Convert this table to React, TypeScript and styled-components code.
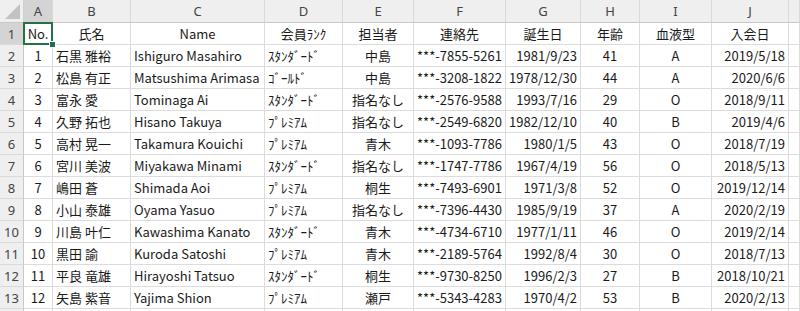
import styled, { createGlobalStyle, css } from 'styled-components'

const GlobalStyle = createGlobalStyle`
  html, body {
    margin: 0;
    padding: 0;
    background: #ffffff;
    overflow: hidden;
  }
`

// row header + A..J + the sliver of K at the right edge
const widths = [24, 29, 78, 134, 78, 71, 92, 75, 59, 72, 77, 11]
const letters = ['A', 'B', 'C', 'D', 'E', 'F', 'G', 'H', 'I', 'J', '']

type Align = 'left' | 'center' | 'right'

const aligns: Align[] = ['center', 'left', 'left', 'left', 'center', 'left', 'right', 'center', 'center', 'right', 'left']

const headers = ['No.', '氏名', 'Name', '会員ﾗﾝｸ', '担当者', '連絡先', '誕生日', '年齢', '血液型', '入会日', '']

const rows: string[][] = [
  ['1', '石黒 雅裕', 'Ishiguro Masahiro', 'ｽﾀﾝﾀﾞｰﾄﾞ', '中島', '***-7855-5261', '1981/9/23', '41', 'A', '2019/5/18'],
  ['2', '松島 有正', 'Matsushima Arimasa', 'ｺﾞｰﾙﾄﾞ', '中島', '***-3208-1822', '1978/12/30', '44', 'A', '2020/6/6'],
  ['3', '富永 愛', 'Tominaga Ai', 'ｽﾀﾝﾀﾞｰﾄﾞ', '指名なし', '***-2576-9588', '1993/7/16', '29', 'O', '2018/9/11'],
  ['4', '久野 拓也', 'Hisano Takuya', 'ﾌﾟﾚﾐｱﾑ', '指名なし', '***-2549-6820', '1982/12/10', '40', 'B', '2019/4/6'],
  ['5', '高村 晃一', 'Takamura Kouichi', 'ﾌﾟﾚﾐｱﾑ', '青木', '***-1093-7786', '1980/1/5', '43', 'O', '2018/7/19'],
  ['6', '宮川 美波', 'Miyakawa Minami', 'ｽﾀﾝﾀﾞｰﾄﾞ', '指名なし', '***-1747-7786', '1967/4/19', '56', 'O', '2018/5/13'],
  ['7', '嶋田 蒼', 'Shimada Aoi', 'ﾌﾟﾚﾐｱﾑ', '桐生', '***-7493-6901', '1971/3/8', '52', 'O', '2019/12/14'],
  ['8', '小山 泰雄', 'Oyama Yasuo', 'ﾌﾟﾚﾐｱﾑ', '指名なし', '***-7396-4430', '1985/9/19', '37', 'A', '2020/2/19'],
  ['9', '川島 叶仁', 'Kawashima Kanato', 'ｽﾀﾝﾀﾞｰﾄﾞ', '青木', '***-4734-6710', '1977/1/11', '46', 'O', '2019/2/14'],
  ['10', '黒田 諭', 'Kuroda Satoshi', 'ﾌﾟﾚﾐｱﾑ', '青木', '***-2189-5764', '1992/8/4', '30', 'O', '2018/7/13'],
  ['11', '平良 竜雄', 'Hirayoshi Tatsuo', 'ｽﾀﾝﾀﾞｰﾄﾞ', '桐生', '***-9730-8250', '1996/2/3', '27', 'B', '2018/10/21'],
  ['12', '矢島 紫音', 'Yajima Shion', 'ﾌﾟﾚﾐｱﾑ', '瀬戸', '***-5343-4283', '1970/4/2', '53', 'B', '2020/2/13'],
]

const Sheet = styled.div`
  display: grid;
  grid-template-columns: ${widths.map((w) => `${w}px`).join(' ')};
  grid-template-rows: 23px;
  grid-auto-rows: 22px;
  width: 800px;
  height: 311px;
  overflow: hidden;
  font-family: 'Noto Sans CJK JP', 'Noto Sans', sans-serif;
  font-size: 13px;
  color: #1a1a1a;
`

const Corner = styled.div`
  position: relative;
  background: #efefef;
  border-right: 1px solid #d0d0d0;
  border-bottom: 1px solid #c8c8c8;
  box-sizing: border-box;
  overflow: hidden;

  &::after {
    content: '';
    position: absolute;
    right: 3px;
    bottom: 3px;
    width: 0;
    height: 0;
    border-left: 15px solid transparent;
    border-bottom: 15px solid #c2c2c2;
  }
`

const ColHead = styled.div<{ $selected?: boolean }>`
  display: flex;
  align-items: center;
  justify-content: center;
  box-sizing: border-box;
  background: ${(p) => (p.$selected ? '#d4d4d4' : '#efefef')};
  border-right: 1px solid #d9d9d9;
  border-bottom: 1px solid #c8c8c8;
  color: #444444;
  font-family: 'Noto Sans', 'Noto Sans CJK JP', sans-serif;
  font-size: 13px;
`

const RowHead = styled.div<{ $selected?: boolean }>`
  display: flex;
  align-items: center;
  justify-content: center;
  box-sizing: border-box;
  background: ${(p) => (p.$selected ? '#d4d4d4' : '#efefef')};
  border-right: 1px solid #c8c8c8;
  border-bottom: 1px solid #d9d9d9;
  color: #444444;
  font-family: 'Noto Sans', 'Noto Sans CJK JP', sans-serif;
  font-size: 13px;
`

const Cell = styled.div<{ $align: Align; $active?: boolean }>`
  position: relative;
  display: flex;
  align-items: center;
  box-sizing: border-box;
  padding: 0 3px;
  border-right: 1px solid #dcdcdc;
  border-bottom: 1px solid #dcdcdc;
  white-space: nowrap;
  justify-content: ${(p) =>
    p.$align === 'left' ? 'flex-start' : p.$align === 'right' ? 'flex-end' : 'center'};

  ${(p) =>
    p.$active &&
    css`
      &::after {
        content: '';
        position: absolute;
        left: -1px;
        top: -1px;
        right: -1px;
        bottom: -1px;
        border: 2px solid #217346;
        pointer-events: none;
      }
      &::before {
        content: '';
        position: absolute;
        right: -4px;
        bottom: -4px;
        width: 5px;
        height: 5px;
        background: #217346;
        border: 1px solid #ffffff;
        z-index: 2;
      }
    `}
`

export default function App() {
  return (
    <>
      <GlobalStyle />
      <Sheet>
        <Corner />
        {letters.map((l, i) => (
          <ColHead key={`col${i}`} $selected={i === 0}>
            {l}
          </ColHead>
        ))}

        <RowHead $selected>1</RowHead>
        {headers.map((h, i) => (
          <Cell key={`h${i}`} $align={i === 10 ? 'left' : 'center'} $active={i === 0}>
            {h}
          </Cell>
        ))}

        {rows.map((r, ri) => [
          <RowHead key={`r${ri}`}>{ri + 2}</RowHead>,
          ...r.map((v, ci) => (
            <Cell key={`c${ri}-${ci}`} $align={aligns[ci]}>
              {v}
            </Cell>
          )),
          <Cell key={`k${ri}`} $align="left" />,
        ])}

        <RowHead />
        {letters.map((_, i) => (
          <Cell key={`e${i}`} $align="left" />
        ))}
      </Sheet>
    </>
  )
}
